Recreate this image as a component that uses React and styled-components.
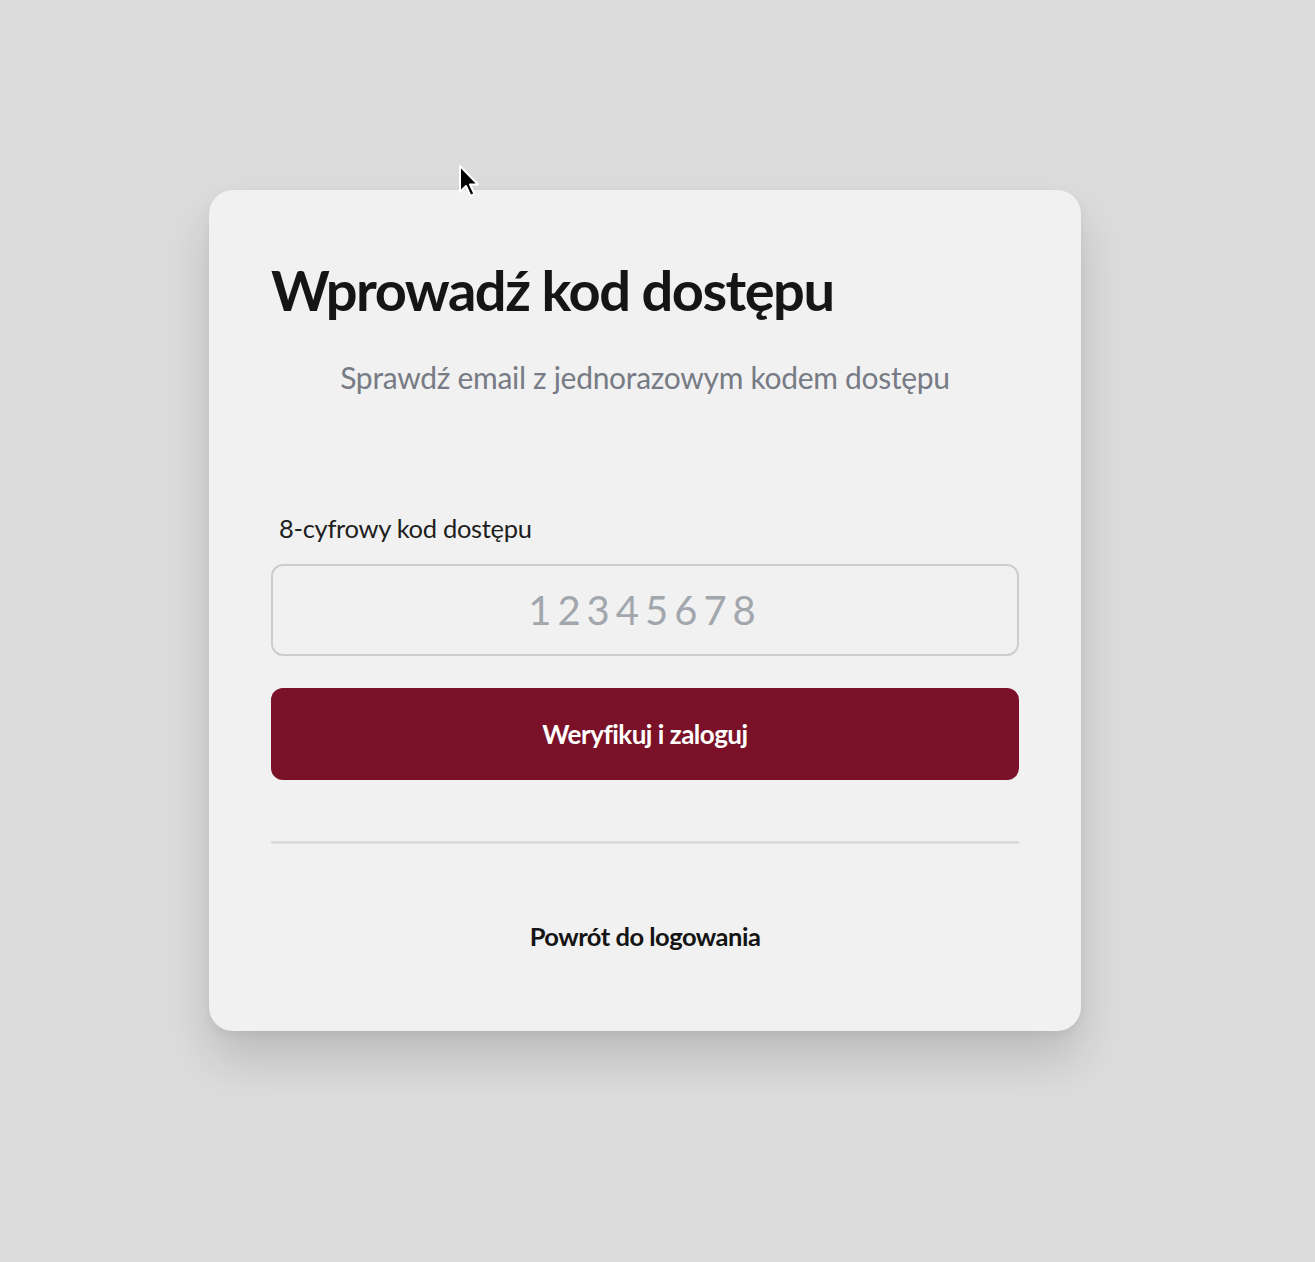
import React from "react";
import styled, { createGlobalStyle } from "styled-components";

const GlobalStyle = createGlobalStyle`
  html, body {
    margin: 0;
    padding: 0;
    background: #dcdcdc;
    font-family: Lato, "Open Sans", sans-serif;
  }
`;

const Page = styled.div`
  position: relative;
  min-height: 1262px;
  display: flex;
  justify-content: center;
  align-items: flex-start;
  padding-top: 190px;
  box-sizing: border-box;
`;

const Card = styled.div`
  width: 872px;
  box-sizing: border-box;
  padding: 66px 62px 80px;
  background: #f1f1f1;
  border-radius: 24px;
  box-shadow: 0 28px 48px rgba(0, 0, 0, 0.15), 0 4px 10px rgba(0, 0, 0, 0.05);
  margin-right: 25px;
`;

const Title = styled.h1`
  margin: 0;
  font-size: 56px;
  font-weight: 700;
  letter-spacing: -1.5px;
  color: #151515;
  line-height: 1.2;
`;

const Subtitle = styled.p`
  margin: 36px 0 0;
  text-align: center;
  font-size: 30px;
  font-weight: 400;
  color: #777b85;
  letter-spacing: -0.3px;
`;

const Field = styled.div`
  margin-top: 118px;
  display: flex;
  flex-direction: column;
`;

const Label = styled.label`
  font-size: 25.5px;
  color: #1e1e1e;
  padding-left: 8px;
  margin-bottom: 21px;
  letter-spacing: -0.3px;
`;

const CodeInput = styled.input`
  height: 92px;
  box-sizing: border-box;
  border: 2px solid #cdcdcf;
  border-radius: 12px;
  background: #f1f1f1;
  text-align: center;
  font-family: Lato, sans-serif;
  font-size: 40px;
  letter-spacing: 6px;
  color: #222;
  outline: none;

  &::placeholder {
    color: #a2a6ad;
  }
`;

const SubmitButton = styled.button`
  margin-top: 32px;
  width: 100%;
  height: 92px;
  border: none;
  border-radius: 12px;
  background: #7b1128;
  color: #ffffff;
  font-family: Lato, sans-serif;
  font-size: 26px;
  font-weight: 700;
  letter-spacing: -0.5px;
  cursor: pointer;
`;

const Divider = styled.hr`
  margin: 61px 0 0;
  border: none;
  height: 3px;
  background: #dcdcdc;
`;

const BackLink = styled.a`
  display: block;
  margin-top: 77px;
  text-align: center;
  font-size: 25.5px;
  font-weight: 700;
  color: #141414;
  text-decoration: none;
  letter-spacing: -0.5px;
`;

// kursor myszy z zrzutu ekranu
const Cursor = styled.svg`
  position: absolute;
  left: 458px;
  top: 164px;
  width: 24px;
  height: 36px;
`;

const App = () => {
  return (
    <>
      <GlobalStyle />
      <Page>
        <Card>
          <Title>Wprowadź kod dostępu</Title>
          <Subtitle>Sprawdź email z jednorazowym kodem dostępu</Subtitle>
          <Field>
            <Label htmlFor="code">8-cyfrowy kod dostępu</Label>
            <CodeInput id="code" placeholder="12345678" />
          </Field>
          <SubmitButton>Weryfikuj i zaloguj</SubmitButton>
          <Divider />
          <BackLink href="#">Powrót do logowania</BackLink>
        </Card>
        <Cursor viewBox="0 0 24 36">
          <path
            d="M2 2 L2 28 L8 22 L12.5 32 L16.5 30 L12 20.5 L20 20.5 Z"
            fill="#000"
            stroke="#fff"
            strokeWidth="2"
            strokeLinejoin="round"
          />
        </Cursor>
      </Page>
    </>
  );
};

export default App;
